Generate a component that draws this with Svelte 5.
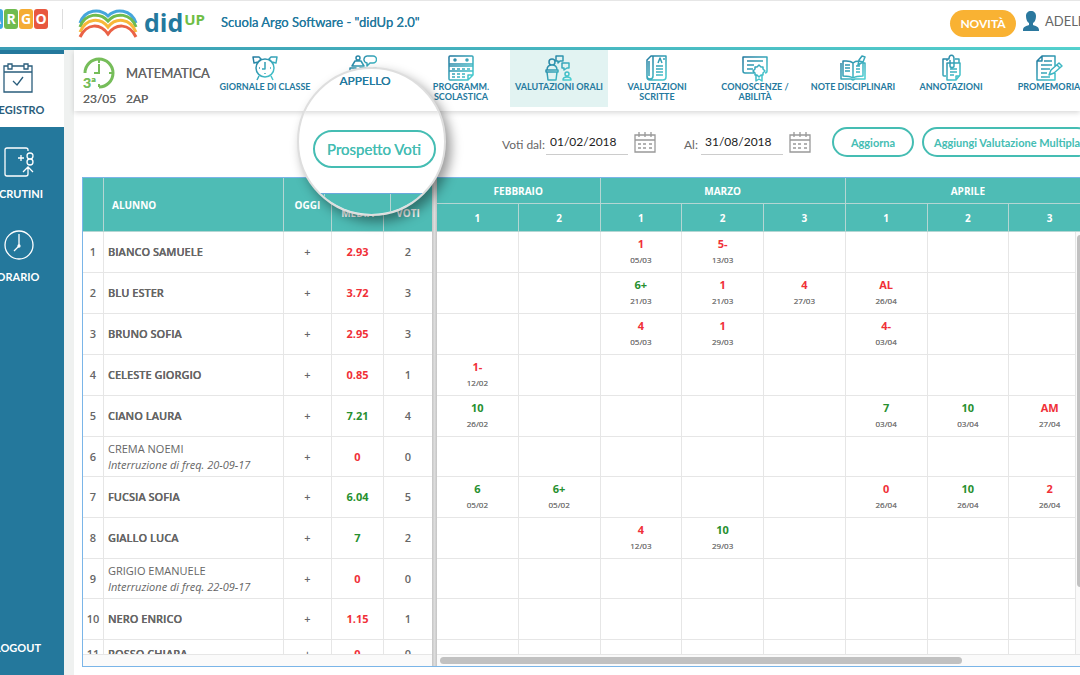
<script>
  let dateFrom = '01/02/2018';
  let dateTo = '31/08/2018';
  let active = 'orali';

  const letters = [
    { char: 'A', color: '#3fa9e0' },
    { char: 'R', color: '#6fbb4f' },
    { char: 'G', color: '#f5ac33' },
    { char: 'O', color: '#e8583f' }
  ];

  const tools = [
    {
      id: 'giornale',
      lines: ['GIORNALE DI CLASSE'],
      path: 'M14 5a9 9 0 1 0 0 18a9 9 0 1 0 0-18M14 8v7h-3M8 14h1M19 14h1M14 19v1M8 22l-2 4M20 22l2 4M7 8L3 9L2 3h6l2 2zM21 8l4 1l1-6h-6l-2 2z'
    },
    {
      id: 'appello',
      lines: [],
      path: 'M9 2a2 2 0 1 0 0 4a2 2 0 1 0 0-4M3 12l3-5h6l3 5zM19 2h5a3 3 0 0 1 0 7h-3l-3 3v-3a3 3 0 0 1 1-7M1 17v-3h6v3zM11 17v-3h6v3zM21 17v-3h6v3z'
    },
    {
      id: 'programmazione',
      lines: ['PROGRAMM.', 'SCOLASTICA'],
      path: 'M3 2h22a1 1 0 0 1 1 1v18l-5 5H3a1 1 0 0 1-1-1V3a1 1 0 0 1 1-1M2 10h24M2 12h24M8 5a1 1 0 1 0 0 2a1 1 0 1 0 0-2M20 5a1 1 0 1 0 0 2a1 1 0 1 0 0-2M5 15h3M10 15h3M15 15h3M20 15h3M2 17h24M5 20h3M10 20h3M15 20h3M5 23h3M10 23h3M15 23h3M21 26v-5h5'
    },
    {
      id: 'orali',
      lines: ['VALUTAZIONI ORALI'],
      path: 'M7 5a3 3 0 1 0 0 6a3 3 0 1 0 0-6M2 16c0-4 2-5 5-5s5 1 5 5M1 16h12v2H1zM2 18l1 8h8l1-8M11 2h7v5h-3l-2 2V7h-2zM17 9h7v5h-2l-3 2v-2h-2zM22 18a2 2 0 1 0 0 4a2 2 0 1 0 0-4M18 26c0-4 8-4 8 0z'
    },
    {
      id: 'scritte',
      lines: ['VALUTAZIONI', 'SCRITTE'],
      path: 'M10 2h13v21a3 3 0 0 1-3 3H7a3 3 0 0 1-3-3V6l4-4h2v20a3 3 0 0 1-6 0M13 12h7M13 15h7M13 18h7M13 21h7M15 9l2-5 2 5M20 5h2M6 7v15'
    },
    {
      id: 'conoscenze',
      lines: ['CONOSCENZE /', 'ABILITÀ'],
      path: 'M13 19H4a2 2 0 0 1-2-2V3h24v14a2 2 0 0 1-2 2M6 7h16M6 11h7M6 15h6M18 11l2 2h2v2l2 2-2 2v2h-2l-2 2-2-2h-2v-2l-2-2 2-2v-2h2zM15 21v6l3-2 3 2v-6'
    },
    {
      id: 'note',
      lines: ['NOTE DISCIPLINARI'],
      path: 'M14 9C11 6 7 7 4 7v15c3 0 7 0 10 2 3-2 7-2 10-2V9M14 9v15M14 9c2-2 4-2 6-2M2 9v16h10l2 1 2-1h10V9h-2M6 11h5M6 14h5M6 17h5M17 12h4M17 15h4M17 18h4M19 11l1-5 3-4 3 1-2 5zM20 7l4 1'
    },
    {
      id: 'annotazioni',
      lines: ['ANNOTAZIONI'],
      path: 'M9 22H7a1 1 0 0 1-1-1V5h4M18 5h4v4M10 7V5h2c0-5 5-5 5 0v7c0 2-4 2-4 0V6M10 9h13v12l-4 5H10zM13 15h7M13 18h7M13 21h4M19 26v-4h4'
    },
    {
      id: 'promemoria',
      lines: ['PROMEMORIA'],
      path: 'M20 12V2H7L2 7v19h18v-7M7 2v5H2M9 7h8M6 11h11M6 15h9M6 19h6M6 23h9M14 21l2-5 8-7 3 3-8 7zM22 11l3 3'
    }
  ];

  const months = [
    { name: 'FEBBRAIO', count: 2 },
    { name: 'MARZO', count: 3 },
    { name: 'APRILE', count: 3 }
  ];

  // marks: column index -> [mark, day]
  const students = [
    { name: 'BIANCO SAMUELE', avg: '2.93', total: 2, marks: { 2: ['1', '05/03'], 3: ['5-', '13/03'] } },
    { name: 'BLU ESTER', avg: '3.72', total: 3, marks: { 2: ['6+', '21/03'], 3: ['1', '21/03'], 4: ['4', '27/03'], 5: ['AL', '26/04'] } },
    { name: 'BRUNO SOFIA', avg: '2.95', total: 3, marks: { 2: ['4', '05/03'], 3: ['1', '29/03'], 5: ['4-', '03/04'] } },
    { name: 'CELESTE GIORGIO', avg: '0.85', total: 1, marks: { 0: ['1-', '12/02'] } },
    { name: 'CIANO LAURA', avg: '7.21', total: 4, marks: { 0: ['10', '26/02'], 5: ['7', '03/04'], 6: ['10', '03/04'], 7: ['AM', '27/04'] } },
    { name: 'CREMA NOEMI', stopped: '20-09-17', avg: '0', total: 0, marks: {} },
    { name: 'FUCSIA SOFIA', avg: '6.04', total: 5, marks: { 0: ['6', '05/02'], 1: ['6+', '05/02'], 5: ['0', '26/04'], 6: ['10', '26/04'], 7: ['2', '26/04'] } },
    { name: 'GIALLO LUCA', avg: '7', total: 2, marks: { 2: ['4', '12/03'], 3: ['10', '29/03'] } },
    { name: 'GRIGIO EMANUELE', stopped: '22-09-17', avg: '0', total: 0, marks: {} },
    { name: 'NERO ENRICO', avg: '1.15', total: 1, marks: {} },
    { name: 'ROSSO CHIARA', avg: '0', total: 0, marks: {} }
  ];

  const columns = [0, 1, 2, 3, 4, 5, 6, 7];
  const passed = (mark) => parseFloat(mark) >= 6;
</script>

<svg class="defs" width="0" height="0" aria-hidden="true">
  <linearGradient id="tint" gradientUnits="userSpaceOnUse" x1="0" y1="0" x2="28" y2="28">
    <stop offset="0.1" stop-color="#237a9f" />
    <stop offset="0.9" stop-color="#4ad0d2" />
  </linearGradient>
</svg>

<div class="app">
  <header>
    <div class="argo">
      {#each letters as letter}
        <span style="background: {letter.color}">{letter.char}</span>
      {/each}
    </div>
    <div class="didup">
      <svg width="60" height="30" viewBox="0 0 60 30" fill="none" stroke-width="3">
        <path stroke="#45a6dc" d="M2 14C7 0 22-1 30 7C38-1 53 0 58 14" />
        <path stroke="#6fbb4f" d="M2 18C7 4 22 3 30 12C38 3 53 4 58 18" />
        <path stroke="#f8b83a" d="M2 23C8 9 22 8 30 18C38 8 52 9 58 23" />
        <path stroke="#ea6246" d="M2 28C9 14 22 14 30 25C38 14 51 14 58 28" />
      </svg>
      <strong>did</strong><sup>UP</sup>
    </div>
    <h1>Scuola Argo Software - "didUp 2.0"</h1>
    <button class="news" type="button">NOVITÀ</button>
    <div class="user">
      <svg width="16" height="20" viewBox="0 0 16 20">
        <path fill="#2b789e" d="M8 0c3 0 5 2 5 5c0 3-1 6-3 7v2c3 1 6 2 6 5v1H0v-1c0-3 3-4 6-5v-2C4 11 3 8 3 5c0-3 2-5 5-5" />
      </svg>
      <span>ADELE</span>
    </div>
  </header>

  <div class="body">
    <nav class="sidebar">
      <a class="current" href="#registro">
        <svg width="30" height="31" viewBox="0 0 30 31">
          <path d="M5 3H1v26h28V3h-4M9 3h12M1 9h28M5 1h4v5H5zM21 1h4v5h-4zM10 18l4 4 6-8" />
        </svg>
        REGISTRO
      </a>
      <a href="#scrutini">
        <svg width="34" height="31" viewBox="-3 0 34 31">
          <path d="M24 4V3q0-2-2-2H3Q1 1 1 3v24q0 2 2 2h19q2 0 2-2v-7M19 25l5-5 5 5M14 11h6M17 8v6M26 6a3 3 0 1 0 0 6a3 3 0 1 0 0-6M26 12a3 3 0 1 0 0 6a3 3 0 1 0 0-6" />
        </svg>
        SCRUTINI
      </a>
      <a href="#orario">
        <svg width="34" height="31" viewBox="-3 0 34 31">
          <path d="M15 1a14 14 0 1 0 0 28a14 14 0 1 0 0-28M15 4v12l-5 5" />
          <circle cx="15" cy="16" r="1" />
        </svg>
        ORARIO
      </a>
      <a class="logout" href="#logout">LOGOUT</a>
    </nav>

    <main>
      <div class="toolbar">
        <div class="lesson">
          <div class="hour">
            <svg width="32" height="32" viewBox="0 0 32 32" fill="none" stroke="#76bd5a">
              <path stroke-width="3" d="M2 16A14 14 0 1 1 16 30" />
              <path stroke-width="2" d="M16 7v9h-5M16 2v4M30 16h-4M16 30v-3" />
            </svg>
            <b>3ª</b>
          </div>
          <span class="subject">MATEMATICA</span>
          <span>23/05</span>
          <span>2AP</span>
        </div>
        <nav class="tools">
          {#each tools as tool}
            <a href="#{tool.id}" class:active={tool.id === active} aria-label={tool.id}>
              <svg width="28" height="28" viewBox="0 0 28 28"><path d={tool.path} /></svg>
              {#each tool.lines as line}
                <span>{line}</span>
              {/each}
            </a>
          {/each}
        </nav>
      </div>

      <form class="filters" on:submit|preventDefault>
        <label for="from">Voti dal:</label>
        <input type="text" id="from" bind:value={dateFrom} />
        <button class="calendar" type="button" aria-label="Calendario data iniziale">
          <svg width="22" height="21" viewBox="0 0 22 21">
            <path d="M1 3h20v17H1zM1 8h20M5 0v5M11 0v5M17 0v5M4 12h3M9 12h3M15 12h3M4 16h3M9 16h3M15 16h3" />
          </svg>
        </button>
        <label class="to" for="to">Al:</label>
        <input type="text" id="to" bind:value={dateTo} />
        <button class="calendar" type="button" aria-label="Calendario data finale">
          <svg width="22" height="21" viewBox="0 0 22 21">
            <path d="M1 3h20v17H1zM1 8h20M5 0v5M11 0v5M17 0v5M4 12h3M9 12h3M15 12h3M4 16h3M9 16h3M15 16h3" />
          </svg>
        </button>
        <button class="pill refresh" type="submit">Aggiorna</button>
        <button class="pill" type="button">Aggiungi Valutazione Multipla</button>
      </form>

      <div class="grid">
        <div class="pane fixed">
          <div class="clip">
            <table>
              <colgroup>
                <col class="c-num" /><col class="c-name" /><col class="c-today" /><col class="c-avg" /><col class="c-total" />
              </colgroup>
              <thead>
                <tr>
                  <th></th>
                  <th class="left">ALUNNO</th>
                  <th>OGGI</th>
                  <th class="low">MEDIA</th>
                  <th class="low">VOTI</th>
                </tr>
              </thead>
              <tbody>
                {#each students as student, i}
                  <tr class:stopped={student.stopped}>
                    <td class="num">{i + 1}</td>
                    <td class="name">
                      {student.name}
                      {#if student.stopped}<i>Interruzione di freq. {student.stopped}</i>{/if}
                    </td>
                    <td class="total">+</td>
                    <td class="mark" class:good={passed(student.avg)}>{student.avg}</td>
                    <td class="total">{student.total}</td>
                  </tr>
                {/each}
              </tbody>
            </table>
          </div>
          <div class="track"></div>
        </div>
        <div class="splitter"></div>
        <div class="pane scroll">
          <div class="clip">
            <table class="marks">
              <thead>
                <tr class="months">
                  {#each months as month}
                    <th colspan={month.count}>{month.name}</th>
                  {/each}
                </tr>
                <tr class="weeks">
                  {#each months as month}
                    {#each Array(month.count) as _, n}
                      <th>{n + 1}</th>
                    {/each}
                  {/each}
                </tr>
              </thead>
              <tbody>
                {#each students as student}
                  <tr class:stopped={student.stopped}>
                    {#each columns as col}
                      <td>
                        {#if student.marks[col]}
                          <span class="mark" class:good={passed(student.marks[col][0])}>{student.marks[col][0]}</span>
                          <small>{student.marks[col][1]}</small>
                        {/if}
                      </td>
                    {/each}
                  </tr>
                {/each}
              </tbody>
            </table>
          </div>
          <div class="track"><div class="thumb"></div></div>
          <div class="vtrack"><div class="thumb"></div></div>
        </div>
      </div>
    </main>
  </div>

  <div class="lens">
    <div class="lens-top">APPELLO</div>
    <div class="lens-mid"><button type="button">Prospetto Voti</button></div>
    <div class="lens-head"><span></span><span></span><span></span></div>
  </div>
</div>

<style>
  :global(body) {
    margin: 0;
    background: #fff;
  }

  * {
    box-sizing: border-box;
  }

  .defs {
    position: absolute;
  }

  .app {
    position: relative;
    display: flex;
    flex-direction: column;
    height: 100vh;
    overflow: hidden;
    font-family: Lato, sans-serif;
    color: #666;
  }

  a {
    color: inherit;
    text-decoration: none;
  }

  button {
    padding: 0;
    border: none;
    background: none;
    font-family: inherit;
    cursor: pointer;
  }

  header {
    display: flex;
    flex: none;
    align-items: center;
    height: 50px;
    border-bottom: 3px solid;
    border-image: linear-gradient(90deg, #3a9db5, #55d3d0) 1;
    box-shadow: inset 0 1px #e6e6e6;
  }

  .argo {
    display: flex;
    flex: none;
    gap: 1px;
    height: 20px;
    margin: 0 14px 10px -11px;
  }

  .argo span {
    width: 14px;
    border-radius: 3px;
    color: #fff;
    font: bold 14px/20px "Open Sans", sans-serif;
    text-align: center;
  }

  .didup {
    display: flex;
    flex: none;
    align-items: center;
    height: 20px;
    margin-bottom: 10px;
    padding-left: 15px;
    border-left: 1px solid #ddd;
    font-family: "Open Sans", sans-serif;
  }

  .didup svg {
    align-self: flex-start;
  }

  .didup strong {
    margin-left: 6px;
    padding-top: 7px;
    color: #24799e;
    font-size: 25px;
    line-height: 30px;
  }

  .didup sup {
    align-self: flex-start;
    margin: 4px 0 0 1px;
    color: #6fbe45;
    font-size: 15px;
    font-weight: bold;
    line-height: 12px;
    vertical-align: top;
  }

  /* heavier than regular, narrower than bold */
  h1,
  .lens {
    text-shadow: 0 0 0 currentColor;
  }

  h1 {
    margin: 0 auto 3px 16px;
    color: #24799e;
    font-size: 13px;
    font-weight: normal;
    white-space: nowrap;
  }

  .news {
    flex: none;
    width: 66px;
    height: 27px;
    border-radius: 14px;
    background: #f9b233;
    color: #fff;
    font-size: 12px;
    font-weight: bold;
  }

  .user {
    display: flex;
    flex: none;
    gap: 6px;
    align-items: center;
    width: 64px;
    padding: 0 0 6px 7px;
    font-size: 13px;
    white-space: nowrap;
  }

  .user svg {
    flex: none;
  }

  .body {
    display: flex;
    flex: 1;
    min-height: 0;
  }

  .sidebar {
    display: flex;
    flex: none;
    flex-direction: column;
    width: 92px;
    margin-left: -28px;
    padding-top: 4px;
    background: #24789c;
    color: #fff;
  }

  .sidebar a {
    display: flex;
    flex-direction: column;
    gap: 9px;
    align-items: center;
    height: 83px;
    padding-top: 20px;
    font-size: 11px;
    font-weight: bold;
    line-height: 14px;
  }

  .sidebar a.current {
    height: 73px;
    padding-top: 9px;
    background: #fff;
    color: #2a5d7c;
  }

  .sidebar a.logout {
    height: auto;
    margin-top: auto;
    padding: 0 0 20px;
  }

  .sidebar svg {
    fill: none;
    stroke: currentColor;
    stroke-width: 1.3;
  }

  main {
    display: flex;
    flex: 1;
    flex-direction: column;
    min-width: 0;
    padding-bottom: 8px;
    border-left: 10px solid #eff1f0;
  }

  .toolbar {
    display: flex;
    flex: none;
    height: 61px;
    box-shadow: 0 2px 5px rgba(0, 0, 0, 0.15);
  }

  .lesson {
    display: grid;
    flex: none;
    grid-template-columns: 43px 1fr;
    grid-template-rows: 34px 18px;
    align-items: center;
    width: 142px;
    padding: 6px 0 0 9px;
    font-size: 12px;
    line-height: 16px;
    text-shadow: 0 0 0 currentColor;
  }

  .lesson .subject {
    font-size: 13px;
  }

  .hour {
    position: relative;
    height: 32px;
  }

  .hour b {
    position: absolute;
    left: 0;
    bottom: -1px;
    color: #76bd5a;
    font-size: 14px;
    line-height: 14px;
  }

  .tools {
    display: flex;
  }

  .tools a {
    display: flex;
    flex: none;
    flex-direction: column;
    align-items: center;
    width: 98px;
    height: 57px;
    padding-top: 4px;
    color: #24799e;
    font-size: 9px;
    font-weight: bold;
    line-height: 10px;
    white-space: nowrap;
  }

  .tools a.active {
    background: #e2f3f2;
  }

  .tools svg {
    flex: none;
    fill: none;
    stroke: url(#tint);
    stroke-width: 1.5;
    stroke-linejoin: round;
  }

  .filters {
    display: flex;
    flex: none;
    align-items: center;
    height: 66px;
    padding: 0 0 4px 428px;
    font-size: 12px;
    white-space: nowrap;
  }

  .filters label {
    flex: none;
    width: 44px;
    padding-top: 4px;
  }

  .filters label.to {
    width: 17px;
    margin-left: 28px;
  }

  .filters input {
    flex: none;
    width: 82px;
    height: 25px;
    padding: 0 4px;
    border: none;
    border-bottom: 1px solid #ccc;
    color: #222;
    font: 12px Lato, sans-serif;
  }

  .calendar {
    flex: none;
    width: 22px;
    height: 21px;
    margin-left: 6px;
  }

  .calendar svg {
    display: block;
    fill: none;
    stroke: #999;
    stroke-width: 1.3;
  }

  .pill {
    flex: none;
    width: 82px;
    height: 30px;
    padding: 0 10px;
    border: 2px solid #45bdb3;
    border-radius: 15px;
    color: #45bdb3;
    font-size: 11px;
    font-weight: bold;
    white-space: nowrap;
  }

  .pill + .pill {
    width: auto;
    margin-left: 8px;
  }

  .refresh {
    margin-left: 21px;
  }

  .grid {
    display: flex;
    flex: 1;
    min-height: 0;
    margin-left: 8px;
    border: 1px solid #7ab5e8;
    border-right: none;
    font-family: "Open Sans", sans-serif;
  }

  .pane {
    position: relative;
    display: flex;
    flex-direction: column;
  }

  .pane.fixed {
    flex: none;
  }

  .pane.scroll {
    flex: 1;
    min-width: 0;
  }

  .clip {
    flex: 1;
    min-height: 0;
    overflow: hidden;
  }

  .splitter {
    flex: none;
    width: 5px;
    background: linear-gradient(90deg, #c4c4c4, #dcdcdc 50%, #c4c4c4);
  }

  table {
    width: 349px;
    border-spacing: 0;
    table-layout: fixed;
  }

  table.marks {
    width: 654px;
  }

  .c-num {
    width: 21px;
  }

  .c-name {
    width: 180px;
  }

  .c-today {
    width: 48px;
  }

  .c-avg {
    width: 52px;
  }

  .c-total {
    width: 48px;
  }

  th {
    height: 54px;
    padding: 0;
    border-right: 1px solid #b4d6d3;
    border-bottom: 1px solid #b4d6d3;
    background: #4ebcb5;
    color: #fff;
    font-size: 10px;
    font-weight: bold;
  }

  th.left {
    padding-left: 8px;
    text-align: left;
  }

  th.low {
    padding-top: 16px;
  }

  .months th {
    height: 26px;
  }

  .weeks th {
    height: 28px;
  }

  td {
    height: 41px;
    padding: 0;
    border-right: 1px solid #e6e6e6;
    border-bottom: 1px solid #e6e6e6;
    font-size: 11px;
    line-height: 16px;
    text-align: center;
  }

  .stopped td {
    height: 40px;
  }

  tbody tr:last-child td {
    height: 28px;
  }

  td.name {
    padding-left: 4px;
    font-weight: 600;
    text-align: left;
    text-shadow: 0 0 0 currentColor;
    white-space: nowrap;
  }

  .stopped td.name {
    font-weight: normal;
    text-shadow: none;
  }

  td i {
    display: block;
  }

  .fixed th:last-child,
  .fixed td:last-child {
    border-right: none;
  }

  td.num,
  td.total {
    font-weight: 600;
  }

  .mark {
    display: block;
    color: #f03038;
    font-weight: bold;
  }

  td.mark {
    display: table-cell;
  }

  .mark.good {
    color: #27902f;
  }

  small {
    display: block;
    color: #777;
    font-size: 8px;
    line-height: 16px;
    text-shadow: 0 0 0 currentColor;
  }

  .track {
    flex: none;
    height: 12px;
    padding: 2px 3px;
    border-top: 1px solid #e6e6e6;
    background: #fafafa;
  }

  .thumb {
    border-radius: 4px;
    background: #c1c1c1;
  }

  .track .thumb {
    width: 82%;
    height: 7px;
  }

  .vtrack {
    position: absolute;
    top: 54px;
    right: 0;
    bottom: 12px;
    width: 5px;
    padding: 3px 0 0 1px;
    border-left: 1px solid #e6e6e6;
    background: #fafafa;
    overflow: hidden;
  }

  .vtrack .thumb {
    width: 7px;
    height: 84%;
  }

  /* magnifying glass over the toolbar and the grid */
  .lens {
    position: absolute;
    top: 67px;
    left: 297px;
    width: 149px;
    height: 149px;
    border: 2px solid #dedede;
    border-radius: 50%;
    background: #fff;
    box-shadow: 5px 6px 12px rgba(0, 0, 0, 0.4);
    overflow: hidden;
  }

  .lens-top {
    height: 42px;
    padding: 4px 13px 0 0;
    box-shadow: 0 2px 5px rgba(0, 0, 0, 0.15);
    color: #24799e;
    font-size: 12px;
    line-height: 16px;
    text-align: center;
  }

  .lens-mid {
    display: flex;
    align-items: center;
    justify-content: center;
    height: 82px;
    padding: 0 0 6px 5px;
  }

  .lens button {
    width: 123px;
    height: 38px;
    border: 2px solid #45bdb3;
    border-radius: 19px;
    color: #45bdb3;
    font-size: 15px;
    text-shadow: inherit;
  }

  .lens-head {
    display: grid;
    grid-template-columns: 26px 66px 1fr;
    height: 30px;
    border-top: 1px solid #69a8dc;
    background: #4ebcb5;
  }

  .lens-head span {
    border-right: 1px solid #b4d6d3;
  }
</style>
